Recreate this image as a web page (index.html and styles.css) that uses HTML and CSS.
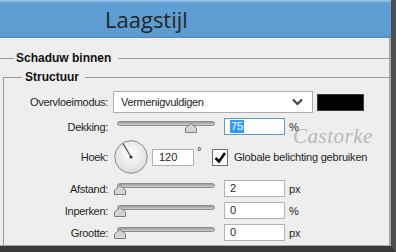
FILE: index.html
```html
<!DOCTYPE html>
<html lang="nl">

<head>
    <meta charset="UTF-8">
    <title>Laagstijl</title>
    <link rel="stylesheet" href="styles.css">
</head>

<body>
    <div class="dialog">
        <div class="titlebar"><span class="title">Laagstijl</span></div>

        <fieldset class="section">
            <legend>Schaduw binnen</legend>

            <fieldset class="group">
                <legend>Structuur</legend>

                <div class="rows">
                    <div class="row">
                        <label class="lbl">Overvloeimodus:</label>
                        <div class="select">
                            <span>Vermenigvuldigen</span>
                            <svg width="11" height="8" viewBox="0 0 11 8">
                                <polyline points="1,1.5 5.5,6 10,1.5" fill="none" stroke="#444" stroke-width="2.2" />
                            </svg>
                        </div>
                        <div class="swatch"></div>
                    </div>

                    <div class="row">
                        <label class="lbl">Dekking:</label>
                        <div class="slider">
                            <div class="track"></div>
                            <svg class="thumb" style="left: 76%" width="12" height="10" viewBox="0 0 12 10">
                                <polygon points="6,0.5 11.5,5 11.5,9.5 0.5,9.5 0.5,5" fill="#d4d4d4" stroke="#7d7d7d" />
                            </svg>
                        </div>
                        <div class="field active"><span class="sel">75</span></div>
                        <span class="unit">%</span>
                    </div>

                    <div class="row row-angle">
                        <label class="lbl">Hoek:</label>
                        <svg class="dial" width="34" height="34" viewBox="0 0 34 34">
                            <defs>
                                <radialGradient id="dialfill" cx="0.5" cy="0.4" r="0.6">
                                    <stop offset="0" stop-color="#ffffff" />
                                    <stop offset="1" stop-color="#dcdcdc" />
                                </radialGradient>
                            </defs>
                            <circle cx="17" cy="17" r="16.3" fill="url(#dialfill)" stroke="#8a8a8a" />
                            <line x1="17" y1="17" x2="9" y2="3.5" stroke="#4a4a4a" stroke-width="1.2" />
                            <circle cx="17" cy="17" r="1.6" fill="#333" />
                        </svg>
                        <div class="field small">120</div>
                        <span class="deg">°</span>
                        <div class="checkbox">
                            <svg width="14" height="15" viewBox="0 0 14 15">
                                <polyline points="2.5,8 6,11.5 12,3" fill="none" stroke="#111" stroke-width="2.6" />
                            </svg>
                        </div>
                        <span class="check-label">Globale belichting gebruiken</span>
                    </div>

                    <div class="row">
                        <label class="lbl">Afstand:</label>
                        <div class="slider">
                            <div class="track"></div>
                            <svg class="thumb" style="left: 3%" width="12" height="10" viewBox="0 0 12 10">
                                <polygon points="6,0.5 11.5,5 11.5,9.5 0.5,9.5 0.5,5" fill="#d4d4d4" stroke="#7d7d7d" />
                            </svg>
                        </div>
                        <div class="field">2</div>
                        <span class="unit">px</span>
                    </div>

                    <div class="row">
                        <label class="lbl">Inperken:</label>
                        <div class="slider">
                            <div class="track"></div>
                            <svg class="thumb" style="left: 3%" width="12" height="10" viewBox="0 0 12 10">
                                <polygon points="6,0.5 11.5,5 11.5,9.5 0.5,9.5 0.5,5" fill="#d4d4d4" stroke="#7d7d7d" />
                            </svg>
                        </div>
                        <div class="field">0</div>
                        <span class="unit">%</span>
                    </div>

                    <div class="row">
                        <label class="lbl">Grootte:</label>
                        <div class="slider">
                            <div class="track"></div>
                            <svg class="thumb" style="left: 3%" width="12" height="10" viewBox="0 0 12 10">
                                <polygon points="6,0.5 11.5,5 11.5,9.5 0.5,9.5 0.5,5" fill="#d4d4d4" stroke="#7d7d7d" />
                            </svg>
                        </div>
                        <div class="field">0</div>
                        <span class="unit">px</span>
                    </div>
                </div>
            </fieldset>
        </fieldset>

        <span class="watermark">Castorke</span>
    </div>
</body>

</html>
```

FILE: styles.css
```css
* {
    margin: 0;
    padding: 0;
    box-sizing: border-box;
}

body {
    width: 396px;
    height: 252px;
    overflow: hidden;
    font-family: "Liberation Sans", Arial, sans-serif;
    font-size: 11px;
    color: #1e1e1e;
}

.dialog {
    position: relative;
    width: 396px;
    height: 252px;
    background: #eeeeee;
    border-right: 5px solid #505050;
    border-bottom: 6px solid #3a3a3a;
    box-shadow: inset -2px -1px 0 #a9a9a9;
    overflow: hidden;
}

.titlebar {
    height: 38px;
    padding-left: 105px;
    background: linear-gradient(#a3c9ea 0, #6ea8d9 2px, #5f9fd3 4px, #5c9cd0 36px, #4f8cc1 38px);
}

.title {
    font-family: "Open Sans", sans-serif;
    font-size: 22px;
    line-height: 38px;
    color: #262626;
}

/* fieldsets: only a top line, plus a left line for the inner group */
.section {
    margin-top: 13px;
    border: 0;
    border-top: 1px solid #9a9a9a;
    min-width: 0;
}

.section > legend {
    margin-left: 14px;
    padding: 0 7px 0 2px;
    font-weight: bold;
    font-size: 12px;
    line-height: 14px;
    color: #111;
}

.group {
    margin-top: 5px;
    margin-left: 3px;
    height: 200px;
    border: 0;
    border-top: 1px solid #9a9a9a;
    border-left: 1px solid #9a9a9a;
    min-width: 0;
}

.group > legend {
    margin-left: 18px;
    padding: 0 6px 0 3px;
    font-weight: bold;
    font-size: 12px;
    line-height: 14px;
    color: #111;
}

.rows {
    display: flex;
    flex-direction: column;
    gap: 5px;
    padding-top: 7px;
}

.row {
    display: flex;
    align-items: center;
    height: 17px;
}

.row:first-child {
    height: 22px;
}

.row-angle {
    height: 34px;
    margin-bottom: 1px;
}

.lbl {
    flex: none;
    width: 104px;
    margin-right: 5px;
    text-align: right;
    letter-spacing: -0.3px;
}

.select {
    display: flex;
    align-items: center;
    justify-content: space-between;
    width: 200px;
    height: 22px;
    padding: 0 9px 0 7px;
    background: #fff;
    border: 1px solid #acacac;
    letter-spacing: -0.3px;
}

.swatch {
    width: 47px;
    height: 17px;
    margin-left: 4px;
    background: #000;
    border: 1px solid #3a3a3a;
}

.slider {
    position: relative;
    flex: none;
    width: 98px;
    height: 17px;
    margin-left: 4px;
}

.track {
    margin-top: 3px;
    height: 5px;
    border: 1px solid #8c8c8c;
    border-radius: 3px;
    background: linear-gradient(#9a9a9a, #cfcfcf);
}

.thumb {
    position: absolute;
    top: 5px;
    margin-left: -6px;
}

.field {
    flex: none;
    width: 61px;
    height: 17px;
    margin-left: 9px;
    padding-left: 5px;
    line-height: 15px;
    background: #fff;
    border: 1px solid #b1b1b1;
}

.field.active {
    border-color: #5a9ad6;
}

.sel {
    display: inline-block;
    padding: 0 1px;
    line-height: 13px;
    color: #fff;
    background: #3399ff;
}

.field.small {
    width: 42px;
    margin-left: 4px;
    padding-left: 6px;
}

.unit {
    margin-left: 4px;
}

.dial {
    flex: none;
    margin-left: 1px;
}

.deg {
    align-self: flex-start;
    width: 12px;
    margin-top: 5px;
    margin-left: 3px;
}

.checkbox {
    display: flex;
    align-items: center;
    justify-content: center;
    width: 16px;
    height: 17px;
    margin-left: 3px;
    background: #fff;
    border: 1px solid #6f6f6f;
}

.check-label {
    margin-left: 6px;
    letter-spacing: -0.2px;
}

.watermark {
    position: absolute;
    left: 293px;
    top: 126px;
    font-family: "Liberation Serif", serif;
    font-style: italic;
    font-size: 21px;
    line-height: 20px;
    letter-spacing: 0.5px;
    color: #b9b9b9;
}
```
